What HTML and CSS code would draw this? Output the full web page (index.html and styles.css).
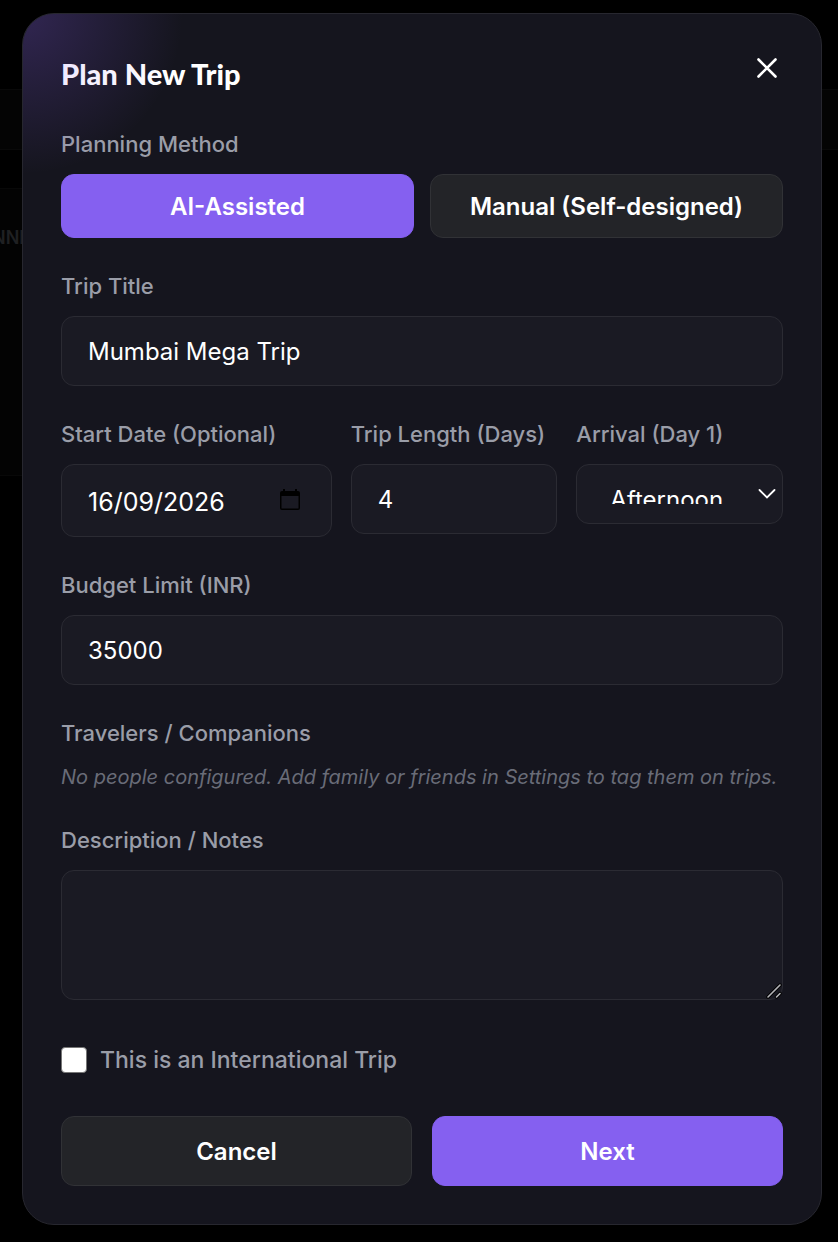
FILE: index.html
```
<!DOCTYPE html>
<html lang="en">
<head>
    <meta charset="UTF-8">
    <meta name="viewport" content="width=device-width, initial-scale=1.0">
    <title>Plan New Trip</title>
    <link rel="stylesheet" href="styles.css">
</head>
<body>
    <div class="page">
        <div class="page-bar"></div>
        <div class="page-card"><span class="page-tag">NNI</span></div>
    </div>

    <div class="modal-overlay">
        <div class="modal" role="dialog" aria-labelledby="modal-title">
            <div class="modal-header">
                <h2 id="modal-title">Plan New Trip</h2>
                <button type="button" class="close-button" aria-label="Close">
                    <svg width="32" height="32" viewBox="0 0 32 32" fill="none" stroke="currentColor" stroke-width="2.6" stroke-linecap="round">
                        <path d="M7.5 7.5L24.5 24.5M24.5 7.5L7.5 24.5"/>
                    </svg>
                </button>
            </div>

            <form class="trip-form" onsubmit="event.preventDefault();">
                <div class="form-group">
                    <span class="label">Planning Method</span>
                    <div class="method-buttons">
                        <button type="button" class="btn btn-primary">AI-Assisted</button>
                        <button type="button" class="btn btn-secondary">Manual (Self-designed)</button>
                    </div>
                </div>

                <div class="form-group">
                    <label class="label" for="title">Trip Title</label>
                    <input type="text" id="title" class="input-field" value="Mumbai Mega Trip">
                </div>

                <div class="form-row">
                    <div class="form-group">
                        <label class="label" for="start">Start Date (Optional)</label>
                        <div class="field-wrap">
                            <input type="text" id="start" class="input-field date-field" value="16/09/2026">
                            <svg class="calendar-icon" width="20" height="22" viewBox="0 0 20 22">
                                <path fill="#000" fill-rule="evenodd" d="M3 0h2v2h10V0h2v2h1a2 2 0 0 1 2 2v15a2 2 0 0 1-2 2H2a2 2 0 0 1-2-2V4a2 2 0 0 1 2-2h1zM1.5 7v12.5h17V7z"/>
                            </svg>
                        </div>
                    </div>
                    <div class="form-group">
                        <label class="label" for="days">Trip Length (Days)</label>
                        <input type="text" inputmode="numeric" id="days" class="input-field" value="4">
                    </div>
                    <div class="form-group">
                        <label class="label" for="arrival">Arrival (Day 1)</label>
                        <div class="field-wrap">
                            <select id="arrival" class="input-field select-field">
                                <option>Morning</option>
                                <option selected>Afternoon</option>
                                <option>Evening</option>
                            </select>
                            <svg class="chevron-icon" width="18" height="12" viewBox="0 0 18 12" fill="none" stroke="#fff" stroke-width="1.8" stroke-linecap="round">
                                <path d="M1.5 2L9 9.5L16.5 2"/>
                            </svg>
                        </div>
                    </div>
                </div>

                <div class="form-group">
                    <label class="label" for="budget">Budget Limit (INR)</label>
                    <input type="text" inputmode="numeric" id="budget" class="input-field" value="35000">
                </div>

                <div class="form-group">
                    <span class="label">Travelers / Companions</span>
                    <p class="hint">No people configured. Add family or friends in Settings to tag them on trips.</p>
                </div>

                <div class="form-group">
                    <label class="label" for="notes">Description / Notes</label>
                    <div class="field-wrap">
                        <textarea id="notes" class="input-field notes-field"></textarea>
                        <svg class="resize-icon" width="16" height="16" viewBox="0 0 16 16" fill="none" stroke-linecap="round">
                            <path stroke="#000" stroke-width="3.4" d="M2 14L14 2M10.5 14L14 10.5"/>
                            <path stroke="#b4b4b8" stroke-width="1.6" d="M2 14L14 2M10.5 14L14 10.5"/>
                        </svg>
                    </div>
                </div>

                <div class="checkbox-row">
                    <input type="checkbox" id="international" class="checkbox">
                    <label for="international">This is an International Trip</label>
                </div>

                <div class="form-actions">
                    <button type="button" class="btn btn-secondary">Cancel</button>
                    <button type="submit" class="btn btn-primary">Next</button>
                </div>
            </form>
        </div>
    </div>
</body>
</html>
```
FILE: styles.css
```
* {
    box-sizing: border-box;
}
body {
    margin: 0;
    background: #000;
    color: #fff;
    font-family: Inter, "Liberation Sans", sans-serif;
    display: grid;
    overflow-x: hidden;
}

/* dimmed page behind the modal */
.page, .modal-overlay {
    grid-area: 1 / 1;
    min-width: 0;
}
.page {
    padding-top: 89px;
    overflow: hidden;
}
.page-bar {
    height: 61px;
    background: #040404;
    border-top: 1px solid #090909;
    border-bottom: 1px solid #090909;
}
.page-card {
    width: 60px;
    height: 288px;
    margin-top: 38px;
    padding-top: 38px;
    background: #030303;
    border-top: 1px solid #080808;
    border-bottom: 1px solid #080808;
}
.page-tag {
    display: block;
    margin-left: -8px;
    font-size: 18px;
    line-height: 22px;
    font-weight: 600;
    color: #1f2022;
}

.modal-overlay {
    padding: 13px 16px 17px 22px;
    z-index: 1;
}
.modal {
    position: relative;
    overflow: hidden;
    padding: 38px;
    background: #15151e;
    border: 1px solid #27272f;
    border-radius: 32px;
}
.modal::before {
    content: "";
    position: absolute;
    inset: 0;
    background: radial-gradient(circle at 0 0, rgba(139, 92, 246, 0.24), rgba(139, 92, 246, 0) 160px);
    pointer-events: none;
    z-index: 1;
}
.modal-header {
    display: flex;
    justify-content: space-between;
    align-items: flex-start;
    margin-bottom: 34px;
}
.modal-header h2 {
    margin: 0;
    font-family: Lato, sans-serif;
    font-size: 29px;
    line-height: 44px;
    font-weight: 900;
}
.close-button {
    width: 32px;
    height: 32px;
    padding: 0;
    border: none;
    background: none;
    color: #fff;
    cursor: pointer;
}
.close-button svg {
    display: block;
}

.trip-form {
    display: flex;
    flex-direction: column;
    gap: 34px;
}
.form-group {
    display: flex;
    flex-direction: column;
    gap: 16px;
    min-width: 0;
}
.form-row {
    display: grid;
    grid-template-columns: 1.31fr 1fr 1fr;
    align-items: start;
    gap: 19px;
}
.label, .checkbox-row label {
    font-size: 22px;
    line-height: 28px;
    font-weight: 500;
    color: #9a9da8;
    white-space: nowrap;
}
.input-field {
    display: block;
    width: 100%;
    height: 70px;
    padding: 0 26px;
    background: #1a1a23;
    border: 1px solid #2b2b33;
    border-radius: 13px;
    color: #fff;
    font-family: inherit;
    font-size: 24px;
    outline: none;
}
.field-wrap {
    position: relative;
}
.date-field {
    height: 73px;
    padding-top: 2px;
    font-size: 25px;
}
.calendar-icon {
    position: absolute;
    top: 25px;
    right: 32px;
}
.select-field {
    appearance: none;
    height: 60px;
    padding: 20px 32px 19px 33px;
    line-height: 30px;
}
.chevron-icon {
    position: absolute;
    top: 24px;
    right: 7px;
    pointer-events: none;
}
.notes-field {
    height: 130px;
    padding: 20px 26px;
    resize: none;
}
.resize-icon {
    position: absolute;
    right: 1px;
    bottom: 1px;
    pointer-events: none;
}
.hint {
    margin: 0;
    font-size: 20px;
    line-height: 29px;
    font-style: italic;
    color: #696c78;
}

.btn {
    flex: 1;
    height: 70px;
    padding: 0 16px;
    border: 1px solid #313236;
    border-radius: 13px;
    color: #fff;
    font-family: inherit;
    font-size: 24px;
    font-weight: 600;
    cursor: pointer;
}
.btn-primary {
    background: #8560f0;
    border-color: #8560f0;
}
.btn-secondary {
    background: #232428;
}
.method-buttons {
    display: flex;
    gap: 16px;
}
.method-buttons .btn {
    height: 64px;
}
.form-actions {
    display: flex;
    gap: 20px;
}
.checkbox-row {
    display: flex;
    align-items: center;
    gap: 13px;
    padding: 12px 0 8px;
}
.checkbox-row label {
    font-size: 23px;
}
.checkbox {
    appearance: none;
    width: 26px;
    height: 26px;
    margin: 0;
    background: #fff;
    border: 1px solid #767676;
    border-radius: 4px;
}
.checkbox:checked {
    background: #8560f0;
}
```
